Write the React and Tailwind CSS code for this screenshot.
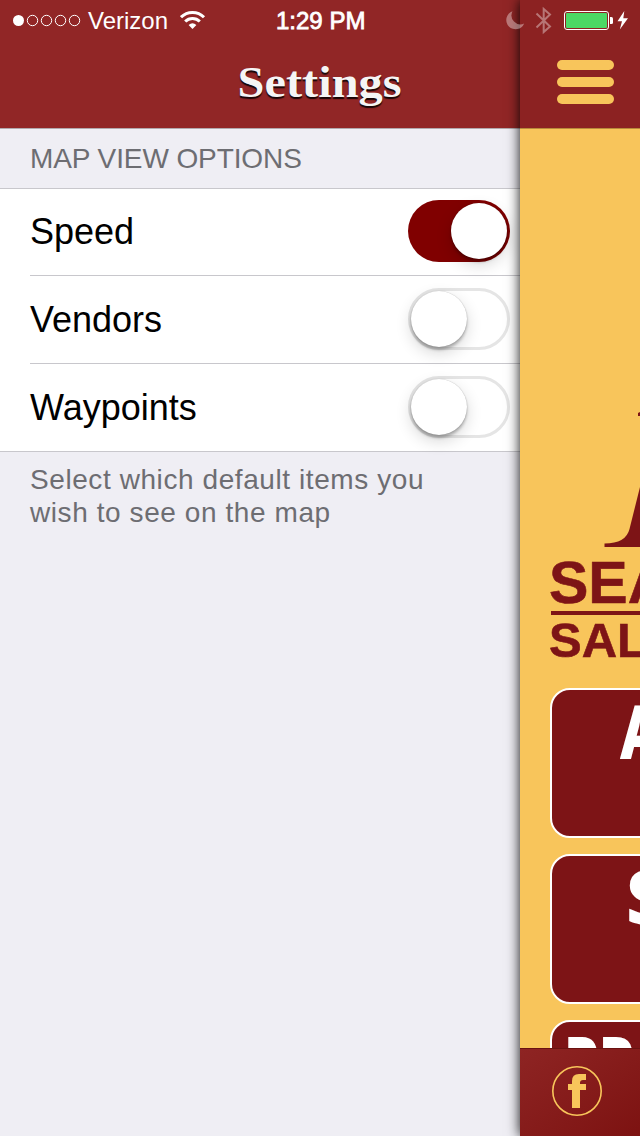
import React from "react";

const sans = "font-['Liberation_Sans',Arial,sans-serif]";

function StatusBar() {
  return (
    <div className="absolute inset-x-0 top-0 z-20 flex h-10 text-white">
      <svg className="h-10 w-[88px] shrink-0" viewBox="0 0 88 40" fill="none" stroke="white">
        <circle cx="18.5" cy="20.5" r="5.5" fill="white" stroke="none" />
        <circle cx="32.5" cy="20.5" r="5.2" />
        <circle cx="46.5" cy="20.5" r="5.2" />
        <circle cx="60.5" cy="20.5" r="5.2" />
        <circle cx="74.5" cy="20.5" r="5.2" />
      </svg>
      <span className="w-[92px] shrink-0 pt-[5px] text-[24px] leading-8">Verizon</span>
      <svg className="h-10 w-[26px] shrink-0" viewBox="180 0 26 40" fill="none" stroke="white">
        <path d="M181 17.2a16.200 16.200 0 0 1 23 0" strokeWidth="3" />
        <path d="M185.2 21.500a10.300 10.300 0 0 1 14.600 0" strokeWidth="3" />
        <path d="M188.600 25a6 6 0 0 1 7.800 0L192.500 29z" fill="white" stroke="none" />
      </svg>
      <span className="ml-[70px] w-[100px] shrink-0 pt-[5px] text-[24px] leading-8 whitespace-nowrap [-webkit-text-stroke:0.8px_white]">
        1:29 PM
      </span>
      <svg className="ml-auto h-10 w-[140px] shrink-0" viewBox="500 0 140 40" fill="none">
        <path d="M512.500 11.200a9.300 9.300 0 1 0 11.700 12.300a9 9 0 0 1-11.700-12.300z" fill="white" opacity=".38" />
        <path d="M536.500 13.500L550 26.500L543.700 32V9L550 14.500L536.500 27.500" stroke="white" strokeWidth="2" opacity=".38" />
        <rect x="564.500" y="11.500" width="44" height="18" rx="2.500" stroke="white" />
        <rect x="566" y="13" width="41" height="15" rx="1" fill="#4cd964" />
        <path d="M610 17h1.500a1.500 1.500 0 0 1 1.500 1.500v4a1.500 1.500 0 0 1-1.500 1.500H610z" fill="white" />
        <path d="M624.300 11L617.500 21.300H622L619.800 29.500L628 18.300H623.300z" fill="white" />
      </svg>
    </div>
  );
}

function Toggle({ on }) {
  return (
    <span
      className={
        on
          ? "flex h-[62px] w-[102px] justify-end rounded-full bg-[#800000] p-[3px]"
          : "flex h-[62px] w-[102px] rounded-full border-[3px] border-[#e5e5e5] bg-white"
      }
    >
      <span className="size-14 rounded-full bg-white shadow-[0_3px_3px_rgba(0,0,0,0.25),0_6px_16px_rgba(0,0,0,0.16),0_0_1px_rgba(0,0,0,0.3)]" />
    </span>
  );
}

function Row({ label, on, first, last }) {
  return (
    <div className={last ? "bg-white" : "bg-white pl-[30px]"}>
      <div
        className={`flex items-start justify-between border-b border-[#c8c7cc] pr-[10px] ${first ? "h-[87px] pt-[11px]" : "h-[88px] pt-3"} ${last ? "pl-[30px]" : ""}`}
      >
        <span className="pt-[11px] text-[36px] leading-[42px] text-black">{label}</span>
        <Toggle on={on} />
      </div>
    </div>
  );
}

function Settings() {
  return (
    <section className="w-[520px] shrink-0 bg-[#efeef4]">
      <header className="flex h-32 items-end justify-center bg-[#912626] pl-[120px]">
        <h1 className="scale-x-[1.1] pb-[20px] font-['Liberation_Serif',serif] text-[44px] leading-[50px] font-bold text-[#f5f5f5] [text-shadow:0_2px_1px_rgba(0,0,0,0.85)]">
          Settings
        </h1>
      </header>
      <h2 className="h-[61px] border-y border-t-[#b2a9ad] border-b-[#c8c7cc] pt-[14px] pl-[30px] text-[28px] leading-8 tracking-[-0.1px] text-[#6d6d72]">
        MAP VIEW OPTIONS
      </h2>
      <Row label="Speed" on first />
      <Row label="Vendors" />
      <Row label="Waypoints" last />
      <p className="pt-[11px] pl-[30px] text-[28px] leading-[33px] tracking-[0.58px] text-[#6d6d72]">
        Select which default items you
        <br />
        wish to see on the map
      </p>
    </section>
  );
}

function Home() {
  return (
    <section className="relative z-10 flex w-[120px] shrink-0 flex-col bg-[#f8c55b] shadow-[0_0_12px_rgba(0,0,0,0.95)]">
      <header className="h-32 shrink-0 bg-[#8c2222] pt-[60px] pl-[37px]">
        <div className="flex w-[57px] flex-col gap-[7px]">
          <i className="h-[10px] rounded-full bg-[#f8c55b]" />
          <i className="h-[10px] rounded-full bg-[#f8c55b]" />
          <i className="h-[10px] rounded-full bg-[#f8c55b]" />
        </div>
      </header>
      <main className="h-[920px] shrink-0 overflow-hidden border-t border-[#b98a3b] text-[#7d1416]">
        <svg className="h-[431px] w-[120px]" viewBox="520 129 120 431" fill="#7d1416">
          <path d="M638 413l2-1v4h-2zM640 487L629.500 529Q626 543.500 604.500 543.500V547H640z" />
        </svg>
        <div className="h-[51px] pl-[29px] text-[59px] leading-[47px] font-bold [-webkit-text-stroke:0.6px_#7d1416]">SEA</div>
        <div className="ml-[31px] h-1 bg-[#7d1416]" />
        <div className="h-[49px] pl-[29px] text-[49px] leading-[50px] font-bold [-webkit-text-stroke:0.6px_#7d1416]">SAL</div>
        <div className="mt-[24px] ml-[30px] flex w-[580px] flex-col gap-4 font-['Noto_Sans',sans-serif] font-bold text-white">
          <div className="h-[150px] rounded-[20px] border-2 border-white bg-[#7d1416] pl-[69px] text-[71px] leading-[81px]">
            <span className="inline-block origin-left scale-x-[0.8] [-webkit-text-stroke:2px_white]">A</span>
          </div>
          <div className="h-[150px] rounded-[20px] border-2 border-white bg-[#7d1416] pl-[75px] text-[71px] leading-[79px]">
            <span className="inline-block origin-left [-webkit-text-stroke:2px_white]">S</span>
          </div>
          <div className="h-[150px] rounded-[20px] border-2 border-white bg-[#7d1416] pl-[13px] font-['Open_Sans',sans-serif] text-[73px] leading-[80px] font-extrabold">
            <span className="inline-block origin-left scale-x-[0.72] tracking-[2px] [-webkit-text-stroke:2px_white]">PR</span>
          </div>
        </div>
      </main>
      <footer className="h-[88px] shrink-0 border-t border-[#6a1211] bg-linear-to-br from-[#8e2423] to-[#7d1211] pt-[17px] pl-[32px]">
        <svg className="size-[50px]" viewBox="0 0 50 50" fill="none">
          <circle cx="25" cy="25" r="24.2" stroke="#f8c55b" strokeWidth="1.6" />
          <path
            fill="#f8c55b"
            d="M20 42V24h-4v-6h4v-3q0-7 7-7h7v6h-3q-3 0-3 3v1h6v6h-6v18z"
          />
        </svg>
      </footer>
    </section>
  );
}

export default function App() {
  return (
    <div className={`relative flex h-[1136px] w-[640px] overflow-hidden ${sans}`}>
      <Settings />
      <Home />
      <StatusBar />
    </div>
  );
}
